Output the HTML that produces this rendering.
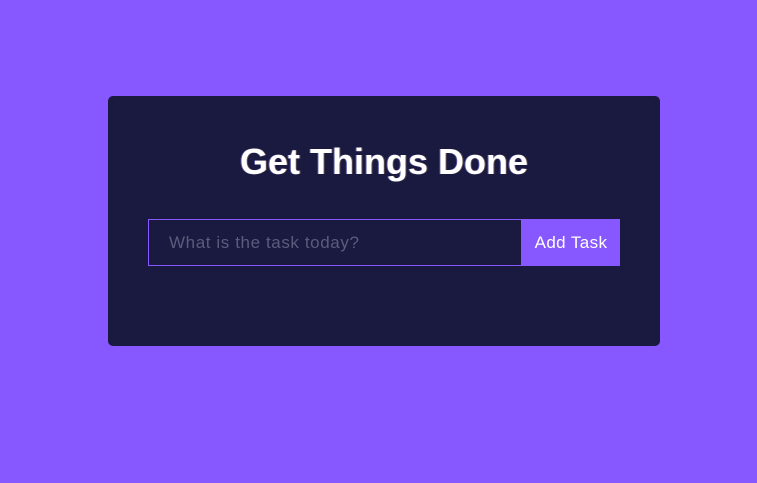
<!DOCTYPE html>
<html><head><meta charset="utf-8"><style>
html,body{margin:0;padding:0;width:757px;height:483px;background:#8758ff;overflow:hidden;font-family:"Liberation Sans",sans-serif}
.card{position:absolute;left:108px;top:96px;width:552px;height:250px;background:#1a1a40;border-radius:5px}
h1{position:absolute;left:0;right:0;top:42px;margin:0;text-align:center;color:#fff;font-size:36px;font-weight:bold;line-height:48px;text-shadow:-1px 0 0 rgba(140,140,255,.5),1px 0 0 rgba(255,200,120,.3)}
.inp{position:absolute;left:148px;top:219px;width:372px;height:45px;border:1px solid #8758ff;box-sizing:content-box}
.ph{position:absolute;left:169px;top:219px;line-height:47px;font-size:17px;letter-spacing:.6px;color:#5a5c7c}
.btn{position:absolute;left:522px;top:219px;width:98px;height:47px;background:#8758ff;color:#fff;font-size:17px;letter-spacing:.4px;line-height:47px;text-align:center}
</style></head><body>
<div class="card"><h1>Get Things Done</h1></div>
<div class="inp"></div>
<div class="ph">What is the task today?</div>
<div class="btn">Add Task</div>
</body></html>
